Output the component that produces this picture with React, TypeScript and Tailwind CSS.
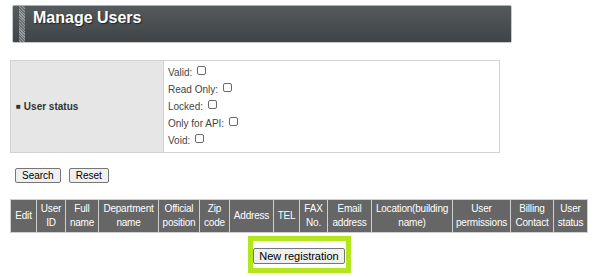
import React from "react";

const statuses = ["Valid:", "Read Only:", "Locked:", "Only for API:", "Void:"];

const columns: [string, number][] = [
  ["Edit", 26],
  ["User ID", 29],
  ["Full name", 33],
  ["Department name", 60],
  ["Official position", 41],
  ["Zip code", 30],
  ["Address", 44],
  ["TEL", 26],
  ["FAX No.", 28],
  ["Email address", 44],
  ["Location(building name)", 81],
  ["User permissions", 58],
  ["Billing Contact", 43],
  ["User status", 34],
];

function Checkbox() {
  return (
    <span className="inline-block w-[9px] h-[9px] ml-[5px] align-[1px] border border-[#6b6b6b] rounded-[2px] bg-white" />
  );
}

export default function App() {
  return (
    <div
      className="w-[612px] h-[277px] bg-white pl-[10px] pt-[5px] overflow-hidden"
      style={{ fontFamily: '"Liberation Sans", Arial, sans-serif' }}
    >
      {/* title bar */}
      <div className="ml-[2px] w-[500px] h-[38px] flex border border-[#c4cacc] border-t-[#aab0b3] rounded-[2px] bg-gradient-to-b from-[#555a5c] to-[#404446]">
        <div className="ml-[6px] w-[6px] h-full bg-[repeating-linear-gradient(45deg,#6c7072_0_1px,#979b9d_1px_2px)]" />
        <h1 className="ml-[8px] mt-[3px] text-[16px] leading-[18px] font-bold text-white [text-shadow:1px_1px_1px_#222]">
          Manage Users
        </h1>
      </div>

      {/* filter */}
      <table className="mt-[17px] w-[490px] border-collapse">
        <tbody>
          <tr>
            <td className="w-[153px] bg-[#e6e6e6] border border-[#d2d2d2] pl-[5px] text-[10px] font-bold text-[#333]">
              <span className="text-[8px] align-[1px] mr-[3px]">■</span>User status
            </td>
            <td className="h-[92px] border border-[#d2d2d2] pl-[4px] pt-[3px] pb-[1px] align-top">
              {statuses.map((s) => (
                <div key={s} className="h-[17px] leading-[17px] text-[10px] text-[#444]">
                  {s}
                  <Checkbox />
                </div>
              ))}
            </td>
          </tr>
        </tbody>
      </table>

      {/* buttons */}
      <div className="mt-[15px] ml-[5px] flex gap-[8px]">
        <button className="h-[15px] px-[6px] text-[10px] leading-[13px] text-black bg-[#efefef] border border-[#767676] rounded-[2px]">
          Search
        </button>
        <button className="h-[15px] px-[6px] text-[10px] leading-[13px] text-black bg-[#efefef] border border-[#767676] rounded-[2px]">
          Reset
        </button>
      </div>

      {/* list header */}
      <div className="w-[578px]">
        <table className="mt-[16px] w-[578px] table-fixed border-collapse">
          <colgroup>
            {columns.map(([name, w]) => (
              <col key={name} style={{ width: w }} />
            ))}
          </colgroup>
          <thead>
            <tr>
              {columns.map(([name]) => (
                <th
                  key={name}
                  className="h-[33px] bg-[#666666] border border-[#cfcfcf] px-0 text-[10px] leading-[14px] font-normal text-white text-center tracking-[-0.2px]"
                >
                  {name}
                </th>
              ))}
            </tr>
          </thead>
        </table>

        <div className="mt-[3px] flex justify-center">
          <div className="w-[103px] h-[37px] border-[5px] border-[#b4e61d] bg-white flex items-center justify-center">
            <button className="mt-[2px] h-[16px] px-[5px] text-[11px] leading-[14px] text-black bg-[#efefef] border border-[#767676] rounded-[2px] whitespace-nowrap">
              New registration
            </button>
          </div>
        </div>
      </div>
    </div>
  );
}
